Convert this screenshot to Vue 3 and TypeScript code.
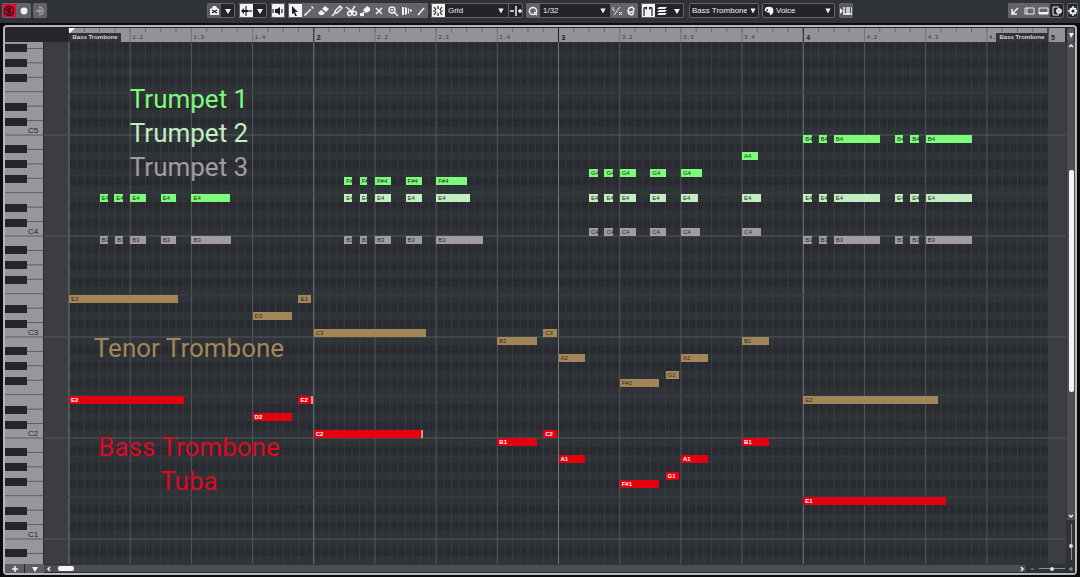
<script setup lang="ts">
import { ref } from 'vue'

type Track = 'tpt1' | 'tpt2' | 'tpt3' | 'tenor' | 'bass'
interface Note { track: Track; name: string; pitch: number; start: number; length: number; edge?: boolean }

const STEPS = 128
const VIEW = 522
const SEMI = 101 / 12
const B4_TOP = 93

const pct = (v: number, total: number): string => `${(v / total) * 100}%`
const pitchTop = (pitch: number): number => B4_TOP + (71 - pitch) * SEMI

const letters: Record<string, number> = { C: 0, D: 2, E: 4, 'F#': 6, F: 5, G: 7, A: 9, B: 11 }
function pitchOf(name: string): number {
  const octave = Number(name.slice(-1))
  return (octave + 1) * 12 + letters[name.slice(0, -1)]
}
function phrase(track: Track, items: [string, number, number, boolean?][]): Note[] {
  return items.map(([name, start, length, edge]) => ({ track, name, pitch: pitchOf(name), start, length, edge }))
}

const notes: Note[] = [
  ...phrase('tpt1', [
    ['E4', 4, 1.1], ['E4', 5.9, 1.1], ['E4', 8, 2.1], ['E4', 12, 2], ['E4', 16, 5.1],
    ['F#4', 36, 1], ['F#4', 38, 1], ['F#4', 40, 2.1], ['F#4', 44, 2.1], ['F#4', 48, 4.1],
    ['G4', 68, 1.1], ['G4', 70, 1.1], ['G4', 72, 2.1], ['G4', 76, 2.1], ['G4', 80, 2.7],
    ['A4', 88, 2.1],
    ['B4', 96, 1.1], ['B4', 98, 1.1], ['B4', 100, 6.1], ['B4', 108, 1.1], ['B4', 110, 1.1], ['B4', 112, 6.1],
  ]),
  ...phrase('tpt2', [
    ['E4', 36, 1], ['E4', 38, 1], ['E4', 40, 2.1], ['E4', 44, 2.1], ['E4', 48, 4.4],
    ['E4', 68, 1.1], ['E4', 70, 1.1], ['E4', 72, 2.1], ['E4', 76, 2.1], ['E4', 80, 2.3],
    ['E4', 88, 2.5],
    ['E4', 96, 1.1], ['E4', 98, 1.1], ['E4', 100, 6.1], ['E4', 108, 1.1], ['E4', 110, 1.1], ['E4', 112, 6.1],
  ]),
  ...phrase('tpt3', [
    ['B3', 4, 1.1], ['B3', 6, 1.1], ['B3', 8, 2.1], ['B3', 12, 2], ['B3', 16, 5.2],
    ['B3', 36, 1], ['B3', 38, 1], ['B3', 40, 2.1], ['B3', 44, 2.1], ['B3', 48, 6.1],
    ['C4', 68, 1.1], ['C4', 70, 1.1], ['C4', 72, 2.1], ['C4', 76, 2.1], ['C4', 80, 2.5],
    ['C4', 88, 2.5],
    ['B3', 96, 1.1], ['B3', 98, 1.1], ['B3', 100, 6.1], ['B3', 108, 1.1], ['B3', 110, 1.1], ['B3', 112, 6.1],
  ]),
  ...phrase('tenor', [
    ['E3', 0, 14.3], ['D3', 24, 5.2], ['E3', 30, 1.7], ['C3', 32, 14.7],
    ['B2', 56, 5.2], ['C3', 62, 1.8], ['A2', 64, 3.5], ['F#2', 72, 5.2], ['G2', 78, 1.8], ['A2', 80, 3.5],
    ['B2', 88, 3.5], ['E2', 96, 17.6],
  ]),
  ...phrase('bass', [
    ['E2', 0, 15], ['D2', 24, 5.2], ['E2', 30, 1.9, true], ['C2', 32, 14.3, true],
    ['B1', 56, 5.2], ['C2', 62, 1.8], ['A1', 64, 3.5], ['F#1', 72, 5.2], ['G1', 78, 1.8], ['A1', 80, 3.5],
    ['B1', 88, 3.5], ['E1', 96, 18.7],
  ]),
]

const darkClasses = [1, 3, 6, 8, 10]
const pitches = Array.from({ length: 64 }, (_, i) => 83 - i)
const darkRows = pitches.filter((p) => darkClasses.includes(p % 12))
const octaveRows = pitches.filter((p) => p % 12 === 0)
const fourthRows = pitches.filter((p) => p % 12 === 4)
const steps = Array.from({ length: STEPS }, (_, i) => i)
const lineKind = (s: number): string => (s % 32 === 0 ? 'bar' : s % 8 === 0 ? 'beat' : s % 2 === 0 ? 'mid' : 'fine')

const whiteLines = Array.from({ length: 36 }, (_, i) => B4_TOP + (i - 6) * (101 / 7))
const blackKeys = [-1, 0, 1, 2, 3, 4].flatMap((o) => [10, 25, 40, 69, 84].map((d) => B4_TOP + o * 101 + d))
const keyNames = [5, 4, 3, 2, 1].map((n) => ({ name: `C${n}`, y: B4_TOP + (5 - n) * 101 - 2 }))

const ticks = Array.from({ length: 65 }, (_, i) => i * 2)
const beats = Array.from({ length: 17 }, (_, i) => {
  const bar = Math.floor(i / 4) + 1
  const beat = i % 4
  return { step: i * 8, major: beat === 0, text: beat ? `${bar}.${beat + 1}` : `${bar}` }
}).slice(1)

const grid = ref('Grid')
const quantize = ref('1/32')
const part = ref('Bass Trombone')
const controller = ref('Voice')
const hZoom = ref(50)
const vZoom = ref(40)

interface Tool { name: string; fill?: string; line?: string }
const tools: Tool[] = [
  { name: 'Draw', line: 'M4 10 9 5', fill: 'M2 12 3 9 5 11ZM9 3 10 2 12 4 11 5Z' },
  { name: 'Erase', fill: 'M6 5 9 2 13 5 10 8ZM5 6 9 9 7 11H4L2 9Z' },
  { name: 'Trim', line: 'M2 12 5 9M5 9 5 7 10 2 12 4 7 9Z' },
  { name: 'Split', line: 'M2 3 9 8M11 2 7 8M9 8A2 2 0 1 0 12 8 2 2 0 0 0 9 8M7 8A2 2 0 1 0 7 11 2 2 0 0 0 7 8' },
  { name: 'Glue', line: 'M3 12 6 8', fill: 'M5 6 9 2 12 4 12 7 8 9ZM2 9H6V12H2Z' },
  { name: 'Mute', line: 'M4 4 10 10M10 4 4 10' },
  { name: 'Zoom', line: 'M9 6A3 3 0 1 1 3 6 3 3 0 1 1 9 6ZM8 8 12 12M5 6H7M6 5V7' },
  { name: 'Time warp', fill: 'M2 3H4V11H2ZM5 3 7 4V10L5 11ZM8 4 9 5V9L8 10ZM10 5 12 6V7L10 8Z' },
  { name: 'Line', line: 'M4 11 10 4' },
]
</script>

<template>
  <main class="editor">
    <header class="toolbar">
      <div class="group">
        <button class="btn red" aria-label="Solo editor">
          <svg viewBox="0 0 14 14"><circle cx="7" cy="7" r="4.5" class="dark-line" /><path d="M9 5H6L5 6 6 7H8L9 8 8 9H5" class="dark-line" /></svg>
        </button>
        <button class="btn lit wide" aria-label="Record in editor"><svg viewBox="0 0 14 14"><circle cx="7" cy="7" r="3.4" class="fill" /></svg></button>
      </div>
      <div class="group g2">
        <button class="btn lit" aria-label="Retrospective record"><svg viewBox="0 0 14 14"><path d="M6 3A4 4 0 1 1 6 11M3 7H7M6 5 8 7 6 9" class="dim-line" /></svg></button>
      </div>
      <span class="space lead"></span>

      <div class="group">
        <button class="btn grey" aria-label="Snapshot">
          <svg viewBox="0 0 14 14"><path d="M3 5 5 4 6 2H9L10 4 12 5V11H3Z" class="fill" /><path d="M5 6 10 9M10 6 5 9" class="ink-line" /></svg>
        </button>
        <button class="btn dark" aria-label="Snapshot menu"><svg viewBox="0 0 14 14"><path d="M4 5H10L7 10Z" class="fill" /></svg></button>
      </div>
      <div class="group g4">
        <button class="btn white" aria-label="Auto-scroll"><svg viewBox="0 0 14 14"><path d="M7 2V12" class="ink-line" /><path d="M2 7 5 4V6H9V8H5V10Z" class="ink" /><path d="M10 6V8M12 6V8" class="ink-line" /></svg></button>
        <button class="btn dark" aria-label="Auto-scroll menu"><svg viewBox="0 0 14 14"><path d="M4 5H10L7 10Z" class="fill" /></svg></button>
      </div>
      <div class="group g4">
        <button class="btn white" aria-label="Acoustic feedback"><svg viewBox="0 0 14 14"><path d="M4 5H6L9 3V11L6 9H4Z" class="ink" /><path d="M2 5V9M11 5V9" class="ink-line" /></svg></button>
      </div>
      <div class="group g3">
        <button class="btn white" aria-label="Select"><svg viewBox="0 0 14 14"><path d="M4 2 10 8H7L9 12 7 12 6 9 4 10Z" class="ink" /></svg></button>
        <button v-for="t in tools" :key="t.name" class="btn lit" :aria-label="t.name">
          <svg viewBox="0 0 14 14"><path v-if="t.fill" :d="t.fill" class="fill" /><path v-if="t.line" :d="t.line" class="tool-line" /></svg>
        </button>
      </div>
      <div class="group g3">
        <button class="btn white" aria-label="Snap"><svg viewBox="0 0 14 14"><path d="M7 2V5M7 9V12M3 3 5 6M3 11 5 8M11 3 9 6M11 11 9 8M2 7H5M9 7H12" class="ink-line" /></svg></button>
        <label class="pick w-grid"><select v-model="grid" aria-label="Snap type"><option>Grid</option></select><svg viewBox="0 0 14 14"><path d="M4 4H10L7 10Z" class="fill" /></svg></label>
        <button class="btn dark" aria-label="Grid relative"><svg viewBox="0 0 14 14"><path d="M1 7H5M9 7H13M7 2V12M11 5V9" class="tool-line" /></svg></button>
      </div>
      <div class="group g3">
        <button class="btn lit" aria-label="Apply quantize"><svg viewBox="0 0 14 14"><circle cx="7" cy="7" r="3.6" class="tool-line" /><path d="M8 8 11 11" class="tool-line" /></svg></button>
        <label class="pick w-quant"><select v-model="quantize" aria-label="Quantize preset"><option>1/32</option></select><svg viewBox="0 0 14 14"><path d="M4 4H10L7 10Z" class="fill" /></svg></label>
        <button class="btn lit" aria-label="Soft quantize"><svg viewBox="0 0 14 14"><path d="M10 3 4 11M3 3V6L5 7M9 8 12 11M12 8 9 11" class="line" /></svg></button>
        <button class="btn lit" aria-label="Quantize panel"><svg viewBox="0 0 14 14"><path d="M4 8H9L10 5 8 3 5 4 4 7 5 10 8 11 10 9" class="tool-line" /></svg></button>
      </div>
      <div class="group g3">
        <button class="btn white" aria-label="Show part borders"><svg viewBox="0 0 14 14"><path d="M3 12V4H6M11 12V4H8" class="ink-line" /><path d="M3 3H6V6ZM11 3H8V6Z" class="ink" /></svg></button>
        <button class="btn dark wide" aria-label="Edit active part"><svg viewBox="0 0 14 14"><path d="M4 3H12L10 5H2ZM4 6H12L10 8H2ZM4 9H12L10 11H2Z" class="fill" /></svg></button>
        <button class="btn dark" aria-label="Part menu"><svg viewBox="0 0 14 14"><path d="M4 5H10L7 10Z" class="fill" /></svg></button>
      </div>
      <div class="group g5">
        <label class="pick w-part"><select v-model="part" aria-label="Active part"><option>Bass Trombone</option></select><svg viewBox="0 0 14 14"><path d="M4 4H10L7 10Z" class="fill" /></svg></label>
      </div>
      <div class="group g3">
        <label class="pick w-voice">
          <svg viewBox="0 0 14 14"><path d="M2 6A5 4 0 1 1 12 6 5 5 0 0 1 8 12V9H5V8L2 7Z" class="fill" /><circle cx="5" cy="6" r="1" class="ink" /></svg>
          <select v-model="controller" aria-label="Event colors"><option>Voice</option></select><svg viewBox="0 0 14 14"><path d="M4 4H10L7 10Z" class="fill" /></svg>
        </label>
      </div>
      <div class="group g4">
        <button class="btn grey" aria-label="MIDI input"><svg viewBox="0 0 14 14"><path d="M1 4 4 7 1 10Z" class="fill" /><path d="M5 3V11M8 3V11M10 3V11M13 3V11" class="tool-line" /><path d="M5 10H13" class="tool-line" /></svg></button>
      </div>

      <span class="space trail"></span>
      <div class="group">
        <button class="btn lit" aria-label="Open in lower zone"><svg viewBox="0 0 14 14"><path d="M10 4 5 9M4 5V10H9" class="tool-line" /></svg></button>
        <button class="btn lit" aria-label="Left zone"><svg viewBox="0 0 14 14"><path d="M3 4H12V10H3ZM5 4V10" class="line" /></svg></button>
        <button class="btn lit" aria-label="Lower zone"><svg viewBox="0 0 14 14"><path d="M3 4H12V10H3Z" class="line" /><path d="M3 8H12V10H3Z" class="fill" /></svg></button>
        <button class="btn dark" aria-label="Window layout"><svg viewBox="0 0 14 14"><path d="M9 3H3V11H9" class="line" /><circle cx="9" cy="7" r="2" class="tool-line" /><path d="M9 4V10M6 7H12" class="line" /></svg></button>
      </div>
      <div class="group g3">
        <button class="btn gear" aria-label="Toolbar setup"><svg viewBox="0 0 14 14"><circle cx="7" cy="7" r="2.6" class="gear-line" /><path d="M7 2V4M7 10V12M2 7H4M10 7H12M4 4 5 5M10 10 9 9M10 4 9 5M4 10 5 9" class="tool-line" /></svg></button>
      </div>
    </header>

    <section class="panel">
      <div class="corner"></div>
      <div class="ruler">
        <div class="ruler-pre"></div>
        <div class="ruler-time">
          <svg class="full">
            <line v-for="t in ticks" :key="t" :x1="pct(t, STEPS)" :x2="pct(t, STEPS)" y1="0" y2="4" class="tick" />
            <line v-for="b in beats" :key="b.step" :x1="pct(b.step, STEPS)" :x2="pct(b.step, STEPS)" y1="0" y2="14" :class="b.major ? 'tick-bar' : 'tick-beat'" />
            <path d="M0 0H6L0 6Z" fill="#fff" />
          </svg>
          <span v-for="b in beats" :key="b.text" class="beat" :class="{ major: b.major }" :style="{ left: pct(b.step, STEPS) }">{{ b.text }}</span>
          <span class="part-name start">Bass Trombone</span>
          <span class="part-name end">Bass Trombone</span>
        </div>
        <div class="ruler-post"></div>
      </div>
      <button class="ruler-menu" aria-label="Ruler menu"><svg viewBox="0 0 8 12"><path d="M2 4H7L4 9Z" class="fill" /></svg></button>

      <div class="keyboard">
        <svg class="full">
          <line v-for="y in whiteLines" :key="y" x1="0" x2="100%" :y1="pct(y, VIEW)" :y2="pct(y, VIEW)" class="key-line" />
          <rect v-for="y in blackKeys" :key="y" x="0" width="22" :y="pct(y, VIEW)" :height="pct(8, VIEW)" class="black-key" />
          <text v-for="k in keyNames" :key="k.name" x="23" :y="pct(k.y, VIEW)" class="key-name">{{ k.name }}</text>
        </svg>
      </div>

      <div class="roll">
        <svg class="full">
          <rect v-for="p in darkRows" :key="p" x="0" width="100%" :y="pct(pitchTop(p), VIEW)" :height="pct(SEMI, VIEW)" class="dark-row" />
        </svg>
        <div class="pre"></div>
        <div class="time">
          <svg class="full">
            <line v-for="s in steps" :key="s" :x1="pct(s, STEPS)" :x2="pct(s, STEPS)" y1="0" y2="100%" :class="lineKind(s)" />
          </svg>
        </div>
        <div class="post"></div>
        <svg class="full">
          <line v-for="p in fourthRows" :key="p" x1="0" x2="100%" :y1="pct(pitchTop(p), VIEW)" :y2="pct(pitchTop(p), VIEW)" class="fourth" />
          <line v-for="p in octaveRows" :key="p" x1="0" x2="100%" :y1="pct(pitchTop(p - 1), VIEW)" :y2="pct(pitchTop(p - 1), VIEW)" class="octave" />
        </svg>
        <div class="overlay">
          <div
            v-for="(n, i) in notes"
            :key="i"
            class="note"
            :class="[n.track, { edge: n.edge }]"
            :style="{ left: pct(n.start, STEPS), width: pct(n.length, STEPS), top: pct(pitchTop(n.pitch), VIEW), height: pct(SEMI, VIEW) }"
          >{{ n.name }}</div>
          <div class="legend" :style="{ top: pct(40, VIEW) }">
            <p class="c-tpt1">Trumpet 1</p>
            <p class="c-tpt2">Trumpet 2</p>
            <p class="c-tpt3">Trumpet 3</p>
          </div>
          <div class="legend" :style="{ top: pct(289, VIEW) }"><p class="c-tenor">Tenor Trombone</p></div>
          <div class="legend" :style="{ top: pct(388, VIEW) }">
            <p class="c-bass">Bass Trombone</p>
            <p class="c-bass">Tuba</p>
          </div>
        </div>
      </div>

      <div class="v-side">
        <div class="v-track">
          <svg viewBox="0 0 8 8"><path d="M2 5 4 3 6 5" class="tool-line" /></svg>
          <span class="v-before"></span>
          <span class="v-thumb"></span>
          <span class="v-after"></span>
          <svg viewBox="0 0 8 8"><path d="M2 3 4 5 6 3" class="tool-line" /></svg>
        </div>
        <input v-model="vZoom" class="v-zoom" type="range" aria-label="Vertical zoom" />
      </div>

      <div class="key-tools">
        <button aria-label="Add lane"><svg viewBox="0 0 14 8"><path d="M4 4H10M7 1V7" class="tool-line" /></svg></button>
        <button aria-label="Lane menu"><svg viewBox="0 0 14 8"><path d="M4 2H10L7 7Z" class="fill" /></svg></button>
      </div>
      <div class="h-side">
        <div class="h-track">
          <svg viewBox="0 0 8 8"><path d="M5 2 3 4 5 6" class="tool-line" /></svg>
          <span class="h-thumb"></span>
          <svg class="push" viewBox="0 0 8 8"><path d="M3 2 5 4 3 6" class="tool-line" /></svg>
        </div>
        <svg class="mini" viewBox="0 0 8 8"><path d="M2 4H5" class="mute-line" /></svg>
        <input v-model="hZoom" class="h-zoom" type="range" aria-label="Horizontal zoom" />
        <svg class="mini" viewBox="0 0 8 8"><path d="M2 4H6M4 2V6" class="mute-line" /></svg>
      </div>
    </section>
  </main>
</template>

<style>
html, body { background: #0b0b0d; }
</style>

<style scoped>
* { box-sizing: border-box; }
.editor { height: 100vh; display: flex; flex-direction: column; background: #0b0b0d; font-family: "Liberation Sans", Arial, sans-serif; overflow: hidden; }
svg { display: block; flex: none; }
button { border: 0; padding: 0; margin: 0; background: none; display: flex; align-items: center; justify-content: center; }

.toolbar { flex: none; height: 23px; padding: 0 2px 2px; display: flex; align-items: center; background: #2f3237; margin-bottom: 2px; }
.space.lead { flex: 161 1 0; }
.space.trail { flex: 156 1 0; }
.group { flex: none; display: flex; height: 15px; outline: 1px solid #63656a; outline-offset: -1px; border-radius: 2px; overflow: hidden; background: #64666a; }
.g2 { margin-left: 2px; }
.g3 { margin-left: 3px; }
.g4 { margin-left: 4px; }
.g5 { margin-left: 5px; }
.btn { width: 14px; height: 15px; }
.btn svg { width: 14px; height: 14px; }
.lit { background: #626469; }
.grey { background: #57595e; }
.dark { background: #222429; }
.wide { width: 15px; }
.white { background: #f3f3f3; }
.red { background: #e0092f; }
.gear { width: 11px; background: #222429; }
.fill { fill: #f2f2f2; }
.ink { fill: #1e1f22; }
.line { fill: none; stroke: #eee; stroke-width: 1; }
.tool-line { fill: none; stroke: #f2f2f2; stroke-width: 1.5; }
.gear-line { fill: none; stroke: #f2f2f2; stroke-width: 2; }
.ink-line { fill: none; stroke: #1e1f22; stroke-width: 1.2; }
.dark-line { fill: none; stroke: #2b0a12; stroke-width: 1.3; }
.dim-line { fill: none; stroke: #a1a2a6; stroke-width: 1.4; }
.mute-line { fill: none; stroke: #9b9da0; stroke-width: 1; }

.pick { display: flex; align-items: center; height: 15px; background: #222429; padding-right: 1px; }
.pick svg { width: 12px; height: 12px; }
.pick select { appearance: none; flex: 1; min-width: 0; height: 15px; border: 0; padding: 0 0 0 3px; margin: 0; background: transparent; color: #f0f0f0; font: 8px/15px "Liberation Sans", Arial, sans-serif; outline: 0; }
.w-grid { width: 64px; border-right: 1px solid #63656a; }
.w-quant { width: 70px; }
.w-part { width: 70px; padding-right: 0; }
.w-voice { width: 73px; padding-left: 1px; }
.w-voice select { padding-left: 1px; }

.panel { flex: 1; min-height: 0; margin: 0 3px 2px; border: 2px solid #b7b7bb; border-radius: 4px; padding-top: 1px; background: #25272b; display: grid; grid-template-columns: 39px minmax(0, 1fr) 9px; grid-template-rows: 14px minmax(0, 1fr) 9px; }
.full { position: absolute; inset: 0; width: 100%; height: 100%; overflow: visible; }

.corner { background: #25272b; }
.ruler { display: flex; min-width: 0; overflow: hidden; }
.ruler-pre { width: 25px; }
.ruler-time { flex: 1; position: relative; background: #929397; }
.ruler-post { width: 18px; background: #929397; border-right: 1px solid #25272b; }
.tick { stroke: #66686c; }
.tick-beat { stroke: #707276; }
.tick-bar { stroke: #1e1f22; }
.beat { position: absolute; top: 5px; padding-left: 2px; font: 6px/9px "Liberation Mono", monospace; color: #3c3d41; }
.beat.major { font: bold 7px/9px "Liberation Sans", Arial, sans-serif; color: #1a1b1e; padding-left: 3px; }
.part-name { position: absolute; top: 5px; height: 9px; background: #313338; color: #d5d6d8; font: bold 6px/9px "Liberation Sans", Arial, sans-serif; width: 52px; text-align: center; white-space: nowrap; }
.start { left: 0; }
.end { right: 0; }
.ruler-menu { background: #57595e; border-radius: 2px; margin: 0 1px; }
.ruler-menu svg { width: 8px; height: 12px; }

.keyboard { position: relative; background: #96979b; overflow: hidden; border-right: 1px solid #2a2c30; }
.key-line { stroke: #5c5d62; }
.black-key { fill: #232529; }
.key-name { font: 8px "Liberation Sans", Arial, sans-serif; fill: #26272b; }

.roll { position: relative; display: flex; overflow: hidden; background: #2e3337; }
.dark-row { fill: #2a2b30; }
.pre, .post { position: relative; background: #3c3d42; }
.pre { width: 25px; }
.post { width: 18px; }
.time { position: relative; flex: 1; }
.bar { stroke: #75787b; }
line.beat { stroke: #54575b; }
.mid { stroke: #3a3d41; }
.fine { stroke: #35383c; }
.fourth { stroke: #3d4044; }
.octave { stroke: #55585b; }
.overlay { position: absolute; inset: 0 18px 0 25px; }
.note { position: absolute; overflow: hidden; white-space: nowrap; padding-left: 2px; font-size: 6px; line-height: 9px; color: #20301f; border: 0 solid #f08a92; }
.tpt1 { background: #7dfb7b; }
.tpt2 { background: #c3eec1; }
.tpt3 { background: #a29c9e; color: #29272a; }
.tenor { background: #a2865a; color: #33291b; }
.bass { background: #e5000f; color: #fff; font-weight: bold; }
.edge { border-right-width: 2px; }
.legend { position: absolute; left: 20px; width: 200px; text-align: center; }
.legend p { margin: 0; font: 400 26px/34px Roboto, "Open Sans", sans-serif; white-space: nowrap; }
.c-tpt1 { color: #7dfb7b; }
.c-tpt2 { color: #c3eec1; }
.c-tpt3 { color: #a29c9e; }
.c-tenor { color: #a2865a; }
.c-bass { color: #dc0a24; }

.v-side { display: flex; flex-direction: column; min-height: 0; background: #2f3237; padding-left: 1px; }
.v-track { flex: 1; min-height: 0; display: flex; flex-direction: column; align-items: center; background: #4b4f53; }
.v-track svg { width: 8px; height: 8px; }
.v-before { flex: 120 1 0; }
.v-thumb { flex: 221 1 0; width: 5px; border-radius: 2px; background: #f4f4f4; }
.v-after { flex: 120 1 0; }
.v-zoom { writing-mode: vertical-lr; direction: rtl; appearance: none; width: 8px; height: 44px; margin: 0; background: linear-gradient(#8f9194, #8f9194) center / 1px 36px no-repeat; }
.v-zoom::-webkit-slider-thumb { appearance: none; width: 4px; height: 4px; border-radius: 2px; background: #ddd; }
.key-tools { display: flex; gap: 1px; background: #25272b; }
.key-tools button { flex: 1; background: #5c5e62; }
.key-tools svg { width: 14px; height: 8px; }
.h-side { grid-column: 2 / 4; display: flex; align-items: center; background: #2f3237; }
.h-track { flex: 1; height: 7px; display: flex; align-items: center; background: #4b4f53; }
.h-track svg { width: 8px; height: 8px; margin-left: 1px; }
.h-thumb { width: 16px; height: 5px; border-radius: 2px; background: #f4f4f4; margin-left: 5px; }
.h-track .push { margin-left: auto; }
.mini { width: 8px; height: 8px; }
.h-track + .mini { margin-left: 3px; }
.h-zoom { appearance: none; width: 26px; height: 8px; margin: 0 2px; background: linear-gradient(#8f9194, #8f9194) center / 100% 1px no-repeat; }
.h-zoom::-webkit-slider-thumb { appearance: none; width: 4px; height: 4px; border-radius: 2px; background: #ddd; }
</style>
